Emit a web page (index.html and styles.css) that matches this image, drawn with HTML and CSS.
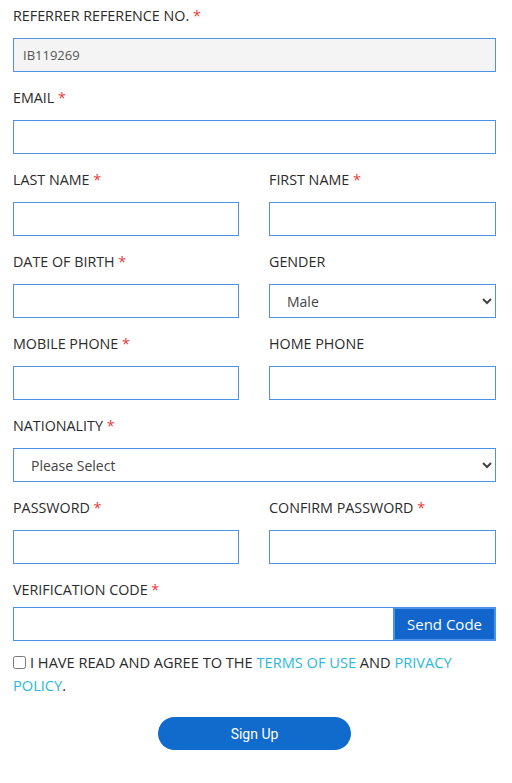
FILE: index.html
```html
<!DOCTYPE html>
<html>
<head>
<meta charset="utf-8">
<link rel="stylesheet" href="styles.css">
</head>
<body>
<form class="form">
  <div class="field">
    <label class="label">REFERRER REFERENCE NO. <span class="req">*</span></label>
    <input class="input readonly" type="text" value="IB119269" readonly>
  </div>
  <div class="field">
    <label class="label">EMAIL <span class="req">*</span></label>
    <input class="input" type="text">
  </div>
  <div class="row">
    <div class="field">
      <label class="label">LAST NAME <span class="req">*</span></label>
      <input class="input" type="text">
    </div>
    <div class="field">
      <label class="label">FIRST NAME <span class="req">*</span></label>
      <input class="input" type="text">
    </div>
  </div>
  <div class="row">
    <div class="field">
      <label class="label">DATE OF BIRTH <span class="req">*</span></label>
      <input class="input" type="text">
    </div>
    <div class="field">
      <label class="label">GENDER</label>
      <select class="input select"><option>Male</option><option>Female</option></select>
    </div>
  </div>
  <div class="row">
    <div class="field">
      <label class="label">MOBILE PHONE <span class="req">*</span></label>
      <input class="input" type="text">
    </div>
    <div class="field">
      <label class="label">HOME PHONE</label>
      <input class="input" type="text">
    </div>
  </div>
  <div class="field">
    <label class="label">NATIONALITY <span class="req">*</span></label>
    <select class="input select"><option>Please Select</option></select>
  </div>
  <div class="row">
    <div class="field">
      <label class="label">PASSWORD <span class="req">*</span></label>
      <input class="input" type="password">
    </div>
    <div class="field">
      <label class="label">CONFIRM PASSWORD <span class="req">*</span></label>
      <input class="input" type="password">
    </div>
  </div>
  <div class="field field-code">
    <label class="label">VERIFICATION CODE <span class="req">*</span></label>
    <div class="code-group">
      <input class="input code-input" type="text">
      <button class="send-btn" type="button">Send Code</button>
    </div>
  </div>
  <div class="agree">
    <input class="check" type="checkbox"><span>I HAVE READ AND AGREE TO THE <a class="link" href="#">TERMS OF USE</a> AND <a class="link" href="#">PRIVACY POLICY</a>.</span>
  </div>
  <div class="submit-wrap">
    <button class="submit" type="button">Sign Up</button>
  </div>
</form>
</body>
</html>
```
FILE: styles.css
```css
* { box-sizing: border-box; }
html, body { margin: 0; padding: 0; background: #fff; }
body {
  font-family: "Open Sans", "Liberation Sans", sans-serif;
  color: #2b2b2b;
}
.form {
  width: 512px;
  padding: 6px 16px 0 13px;
}
.field {
  display: flex;
  flex-direction: column;
  margin-bottom: 16px;
}
.row {
  display: grid;
  grid-template-columns: 226px 227px;
  column-gap: 30px;
}
.label {
  font-size: 14.3px;
  line-height: 20px;
  height: 20px;
  margin-bottom: 12px;
  color: #2b2b2b;
}
.req { color: #e53a3a; }
.input {
  display: block;
  width: 100%;
  height: 34px;
  border: 1px solid #4c93e6;
  border-radius: 0;
  background: #fff;
  font-family: "Open Sans", "Liberation Sans", sans-serif;
  font-size: 13px;
  color: #555;
  padding: 0 9px;
  outline: none;
  margin: 0;
}
.readonly { background: #f4f4f4; }
.select {
  font-size: 14px;
  padding-left: 13px;
  color: #444;
}
.field-code .label { margin-bottom: 7px; }
.field-code { margin-bottom: 10px; }
.code-group {
  display: flex;
  height: 34px;
}
.code-input { flex: 1; width: auto; border-right: none; }
.send-btn {
  width: 103px;
  height: 34px;
  margin: 0;
  background: #1266cb;
  border: 2px solid #4c93e6;
  color: #fff;
  font-family: "Open Sans", "Liberation Sans", sans-serif;
  font-size: 15px;
  padding: 0;
  cursor: pointer;
}
.agree {
  font-size: 14.6px;
  line-height: 23px;
  color: #2b2b2b;
}
.check {
  width: 13px;
  height: 13px;
  margin: 0 4px 0 0;
  vertical-align: -1px;
}
.link { color: #2cb9da; text-decoration: none; }
.submit-wrap {
  display: flex;
  justify-content: center;
  margin-top: 20px;
}
.submit {
  width: 193px;
  height: 33px;
  border: none;
  border-radius: 17px;
  background: #116bcc;
  color: #fff;
  font-family: Roboto, "Liberation Sans", sans-serif;
  font-size: 14px;
  cursor: pointer;
}
```
